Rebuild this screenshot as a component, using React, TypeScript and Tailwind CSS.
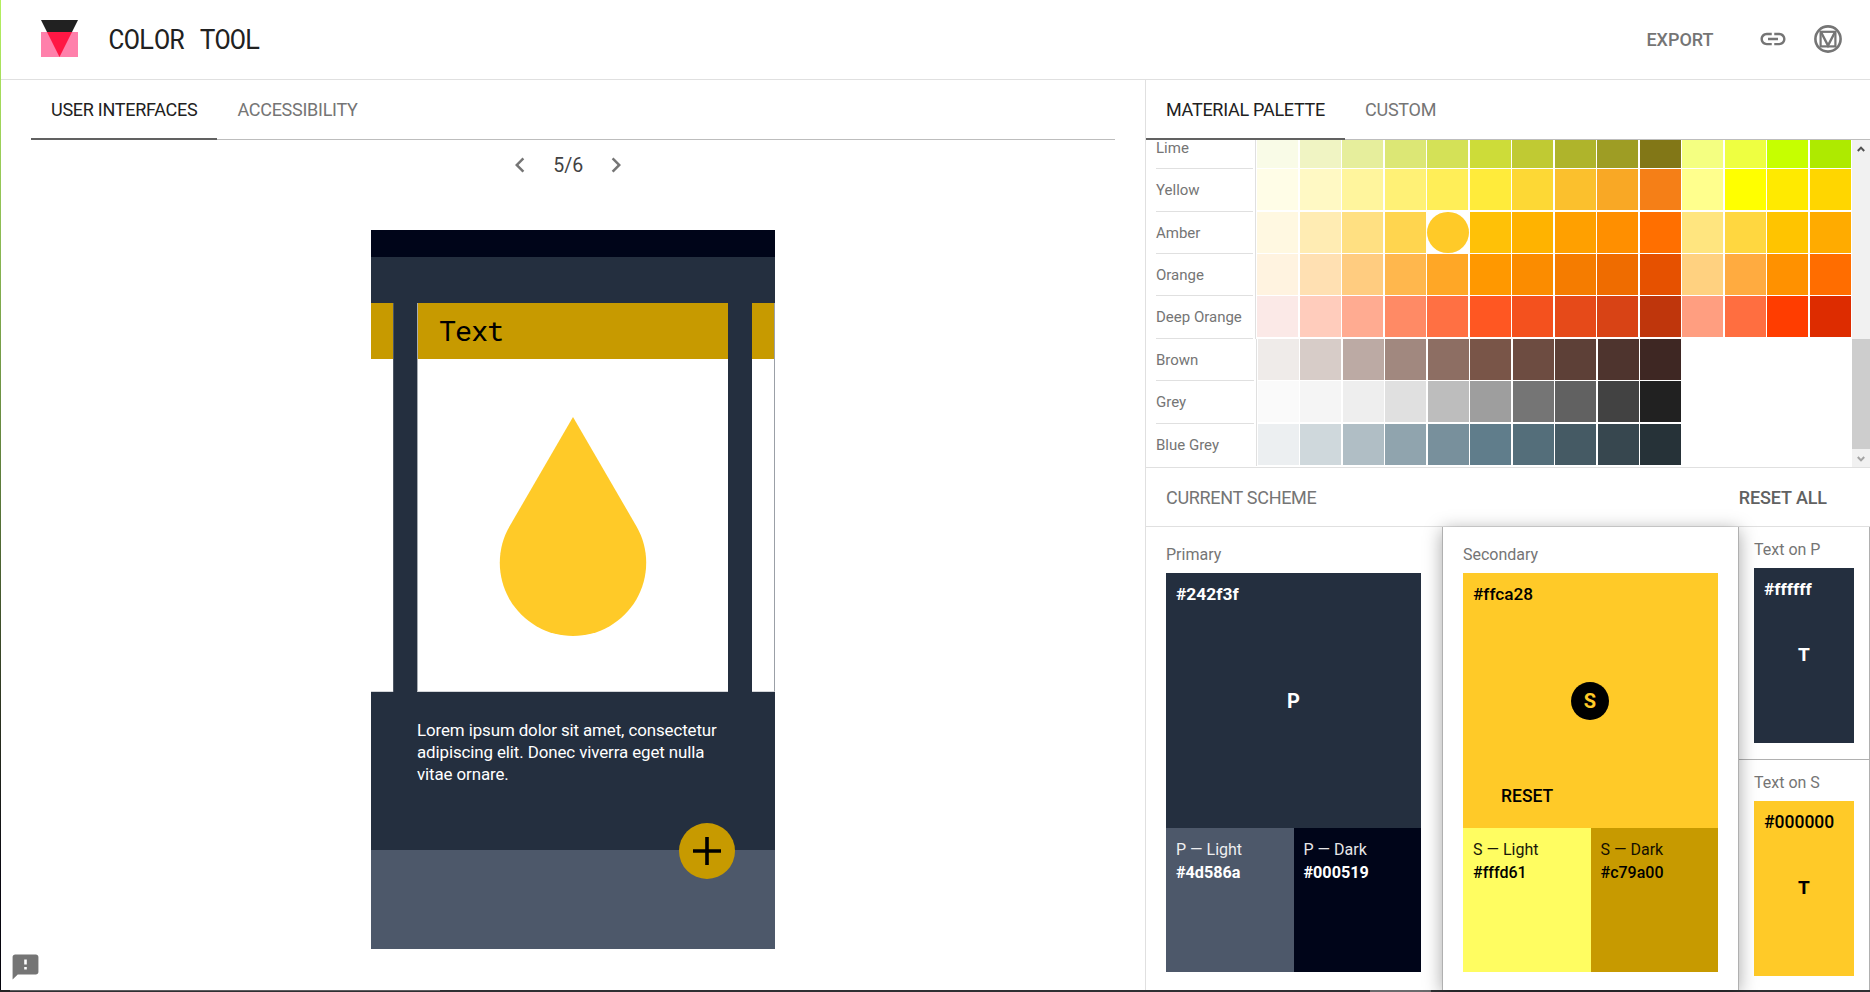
import React from "react";

type PaletteRow = { name: string; colors: string[] };

const PALETTE: PaletteRow[] = [
  { name: "Lime", colors: ["#f9fbe7", "#f0f4c3", "#e6ee9c", "#dce775", "#d4e157", "#cddc39", "#c0ca33", "#afb42b", "#9e9d24", "#827717", "#f4ff81", "#eeff41", "#c6ff00", "#aeea00"] },
  { name: "Yellow", colors: ["#fffde7", "#fff9c4", "#fff59d", "#fff176", "#ffee58", "#ffeb3b", "#fdd835", "#fbc02d", "#f9a825", "#f57f17", "#ffff8d", "#ffff00", "#ffea00", "#ffd600"] },
  { name: "Amber", colors: ["#fff8e1", "#ffecb3", "#ffe082", "#ffd54f", "#ffca28", "#ffc107", "#ffb300", "#ffa000", "#ff8f00", "#ff6f00", "#ffe57f", "#ffd740", "#ffc400", "#ffab00"] },
  { name: "Orange", colors: ["#fff3e0", "#ffe0b2", "#ffcc80", "#ffb74d", "#ffa726", "#ff9800", "#fb8c00", "#f57c00", "#ef6c00", "#e65100", "#ffd180", "#ffab40", "#ff9100", "#ff6d00"] },
  { name: "Deep Orange", colors: ["#fbe9e7", "#ffccbc", "#ffab91", "#ff8a65", "#ff7043", "#ff5722", "#f4511e", "#e64a19", "#d84315", "#bf360c", "#ff9e80", "#ff6e40", "#ff3d00", "#dd2c00"] },
  { name: "Brown", colors: ["#efebe9", "#d7ccc8", "#bcaaa4", "#a1887f", "#8d6e63", "#795548", "#6d4c41", "#5d4037", "#4e342e", "#3e2723"] },
  { name: "Grey", colors: ["#fafafa", "#f5f5f5", "#eeeeee", "#e0e0e0", "#bdbdbd", "#9e9e9e", "#757575", "#616161", "#424242", "#212121"] },
  { name: "Blue Grey", colors: ["#eceff1", "#cfd8dc", "#b0bec5", "#90a4ae", "#78909c", "#607d8b", "#546e7a", "#455a64", "#37474f", "#263238"] },
];

const SELECTED = "#ffca28";

function Header() {
  return (
    <header className="flex h-20 shrink-0 items-center border-b border-[#e0e0e0] pl-10 pr-[27px] text-[#757575]">
      <svg width="37" height="37" viewBox="0 0 37 37" className="-mt-0.5">
        <path d="M0 0H37L18.5 37Z" fill="#212121" />
        <rect y="12" width="37" height="25" fill="#ff80ab" />
        <path d="M6 12H31L18.5 37Z" fill="#ff1744" />
      </svg>
      <h1 className="-mt-0.5 ml-[30.5px] font-['Roboto_Mono','Liberation_Mono',monospace] text-[27px] leading-8 tracking-[-1.05px] text-[#212121]">
        COLOR TOOL
      </h1>
      <div className="ml-auto flex items-center">
        <span className="text-[18px] font-medium leading-6">EXPORT</span>
        <svg width="30" height="30" viewBox="0 0 24 24" fill="currentColor" className="-mt-px ml-[44px]">
          <path d="M3.9 12c0-1.71 1.39-3.1 3.1-3.1h4V7H7c-2.76 0-5 2.24-5 5s2.24 5 5 5h4v-1.9H7c-1.71 0-3.1-1.39-3.1-3.1zM8 13h8v-2H8v2zm9-6h-4v1.9h4c1.71 0 3.1 1.39 3.1 3.1s-1.39 3.1-3.1 3.1h-4V17h4c2.76 0 5-2.24 5-5s-2.24-5-5-5z" />
        </svg>
        <svg width="30" height="30" viewBox="0 0 30 30" fill="none" stroke="currentColor" strokeWidth="2.6" className="-mt-px ml-[25.5px]">
          <circle cx="15" cy="15" r="12.6" />
          <rect x="7.6" y="7.8" width="14.8" height="14.6" strokeWidth="2.2" />
          <path d="M8 8L15 21.6L22 8" strokeWidth="2.4" />
        </svg>
      </div>
    </header>
  );
}

function Tabs({ active, other }: { active: string; other: string }) {
  return (
    <div className="flex h-[60px] shrink-0 border-b border-[#bdbdbd] text-[18px] leading-[60px]">
      <div className="-mb-px h-[60px] whitespace-nowrap border-b-2 border-[#616161] px-5 tracking-[-0.27px] text-[#212121]">{active}</div>
      <div className="whitespace-nowrap px-5 tracking-[-0.27px] text-[#757575]">{other}</div>
    </div>
  );
}

function Preview() {
  return (
    <div className="relative mx-auto flex h-[719px] w-[404px] flex-col">
      <div className="h-[27px] bg-[#000519]" />
      <div className="h-[46px] bg-[#242f3f]" />
      <div className="flex h-[389px]">
        <div className="w-[22px] border-b border-[#d3d5d9]">
          <div className="h-14 bg-[#c79a00]" />
        </div>
        <div className="w-6 border-l border-[#4d5663] bg-[#242f3f]" />
        <div className="flex w-[311px] flex-col items-center border-b border-l border-b-[#d3d5d9] border-l-[#a7acb2]">
          <div className="h-14 w-full bg-[#c79a00] pl-[21px] font-['Roboto_Mono','Liberation_Mono',monospace] text-[28.5px] leading-[54px] tracking-[-1.1px] text-black">
            Text
          </div>
          <svg width="148" height="220" viewBox="0 0 148 220" className="mt-[58px]" fill="#ffca28">
            <path d="M74 0L137.4 109.2A73.2 73.2 0 1 1 10.6 109.2Z" />
          </svg>
        </div>
        <div className="w-6 bg-[#242f3f]" />
        <div className="w-[23px] border-b border-r border-b-[#d3d5d9] border-r-[#9ba0a7]">
          <div className="h-14 bg-[#c79a00]" />
        </div>
      </div>
      <div className="h-[158px] bg-[#242f3f] pl-[46px] pt-[27px] text-[16.9px] leading-[22px] tracking-[-0.1px] text-white">
        Lorem ipsum dolor sit amet, consectetur
        <br />
        adipiscing elit. Donec viverra eget nulla
        <br />
        vitae ornare.
      </div>
      <div className="h-[99px] bg-[#4d586a]" />
      <svg width="56" height="56" viewBox="0 0 56 56" className="absolute left-[308px] top-[593px]">
        <circle cx="28" cy="28" r="28" fill="#c79a00" />
        <path d="M28 14V42M14 28H42" stroke="#000" strokeWidth="3.6" />
      </svg>
    </div>
  );
}

function PaletteGrid() {
  return (
    <div className="flex h-[328px] shrink-0 border-b border-[#e0e0e0]">
      <div className="flex min-w-0 flex-1 flex-col justify-end overflow-hidden pb-[0.7px]">
        {PALETTE.map((row, i) => (
          <div key={row.name} className="flex h-[42.48px] shrink-0">
            <div
              className={
                "ml-[10px] w-[97.5px] whitespace-nowrap text-[15px] leading-[43.6px] text-[#757575] " +
                (i < PALETTE.length - 1 ? "border-b border-[#e0e0e0]" : "")
              }
            >
              {row.name}
            </div>
            <div className="ml-[2.5px] w-px bg-[#e0e0e0]" />
            <div className="flex pl-px">
              {row.colors.map((c) => (
                <div key={c} className="w-[42.47px]">
                  <div
                    className={"h-[41px] " + (c === SELECTED ? "w-[41.5px] rounded-full" : "w-[41px]")}
                    style={{ backgroundColor: c }}
                  />
                </div>
              ))}
            </div>
          </div>
        ))}
      </div>
      <div className="flex w-[18px] flex-col items-center bg-[#f1f1f1]">
        <svg width="18" height="18" viewBox="0 0 18 18" fill="none" stroke="#505050" strokeWidth="2">
          <path d="M5.8 11L9 7.6L12.2 11" />
        </svg>
        <div className="mt-[181px] h-[110px] w-full bg-[#cdcdcd]" />
        <svg width="18" height="18" viewBox="0 0 18 18" fill="none" stroke="#a3a3a3" strokeWidth="2">
          <path d="M5.8 8L9 11.4L12.2 8" />
        </svg>
      </div>
    </div>
  );
}

function SchemeCard(props: {
  title: string;
  hex: string;
  main: string;
  tone: string;
  hexStyle: string;
  shadeHexStyle: string;
  marker: React.ReactNode;
  reset?: boolean;
  shades: { name: string; hex: string; bg: string }[];
}) {
  return (
    <div className="pl-5 pt-3">
      <div className="h-[34px] text-[16px] leading-8 text-[#757575]">{props.title}</div>
      <div className={"flex h-[255px] w-[255px] flex-col " + props.main + " " + props.tone}>
        <div className={"h-[109px] pl-[10px] pt-[9px] leading-6 " + props.hexStyle}>{props.hex}</div>
        <div className="flex h-[37px] items-center justify-center">{props.marker}</div>
        {props.reset && <div className="pl-[38px] pt-[65px] text-[17.5px] font-medium leading-6">RESET</div>}
      </div>
      <div className="flex">
        {props.shades.map((s) => (
          <div key={s.hex} className={"h-36 w-[127.5px] pl-[10px] pt-[10px] text-[16px] leading-[23px] " + s.bg + " " + props.tone}>
            <div className="opacity-90">{s.name}</div>
            <div className={props.shadeHexStyle}>{s.hex}</div>
          </div>
        ))}
      </div>
    </div>
  );
}

function TextCard({ title, hex, box, hexStyle }: { title: string; hex: string; box: string; hexStyle: string }) {
  return (
    <div className="pl-[15px] pt-[7px]">
      <div className="h-[34px] text-[16px] leading-8 text-[#757575]">{title}</div>
      <div className={"flex h-[175px] w-[100px] flex-col " + box}>
        <div className={"h-[67px] pl-[10px] pt-[9px] leading-6 " + hexStyle}>{hex}</div>
        <div className="text-center text-[19px] font-bold leading-[39px]">T</div>
      </div>
    </div>
  );
}

export default function App() {
  return (
    <div className="flex h-[992px] w-[1870px] flex-col overflow-hidden bg-white font-['Roboto',sans-serif]">
      <div className="flex h-[990px]">
        <div className="w-px bg-[linear-gradient(to_bottom,#b4f05f_0%,#8fbf55_22%,#5b7a3a_50%,#2c3320_72%,#0a0912_88%,#05040c_100%)]" />
        <div className="flex w-[1869px] flex-col">
          <Header />
          <div className="flex min-h-0 flex-1">
            <main className="flex w-[1144px] flex-col">
              <div className="mx-[30px]">
                <Tabs active="USER INTERFACES" other="ACCESSIBILITY" />
              </div>
              <div className="flex h-[90px] items-start justify-center pr-[9.5px] pt-[10px] text-[#757575]">
                <svg width="30" height="30" viewBox="0 0 24 24" fill="currentColor">
                  <path d="M15.41 7.41L14 6l-6 6 6 6 1.41-1.41L10.83 12z" />
                </svg>
                <span className="w-[66px] text-center text-[19.5px] leading-[31px] text-[#424242]">5/6</span>
                <svg width="30" height="30" viewBox="0 0 24 24" fill="currentColor">
                  <path d="M10 6L8.59 7.41 13.17 12l-4.58 4.59L10 18l6-6z" />
                </svg>
              </div>
              <Preview />
              <svg width="31" height="30" viewBox="0 0 24 24" preserveAspectRatio="none" fill="#757575" className="ml-[9.4px] mt-[2.5px]">
                <path d="M20 2H4c-1.1 0-1.99.9-1.99 2L2 22l4-4h14c1.1 0 2-.9 2-2V4c0-1.1-.9-2-2-2zm-7 12h-2v-2h2v2zm0-4h-2V6h2v4z" />
              </svg>
            </main>
            <aside className="flex w-[725px] flex-col border-l border-[#e0e0e0]">
              <Tabs active="MATERIAL PALETTE" other="CUSTOM" />
              <PaletteGrid />
              <div className="flex h-[59px] shrink-0 items-center justify-between border-b border-[#e0e0e0] pl-5 pr-[43px] text-[18px] text-[#757575]">
                <span className="tracking-[-0.3px]">CURRENT SCHEME</span>
                <span className="font-medium tracking-[-0.1px] text-[#616161]">RESET ALL</span>
              </div>
              <div className="flex min-h-0 flex-1">
                <section className="w-[296px]">
                  <SchemeCard
                    title="Primary"
                    hex="#242f3f"
                    main="bg-[#242f3f]"
                    tone="text-white"
                    hexStyle="text-[17.4px] font-bold"
                    shadeHexStyle="text-[16.2px] font-bold"
                    marker={<span className="text-[20px] font-bold">P</span>}
                    shades={[
                      { name: "P — Light", hex: "#4d586a", bg: "bg-[#4d586a]" },
                      { name: "P — Dark", hex: "#000519", bg: "bg-[#000519]" },
                    ]}
                  />
                </section>
                <section className="z-10 w-[297px] border-x border-[#b0b0b0] bg-white shadow-[0_3px_17px_rgba(0,0,0,0.35)]">
                  <SchemeCard
                    title="Secondary"
                    hex="#ffca28"
                    main="bg-[#ffca28]"
                    tone="text-black"
                    hexStyle="text-[17.2px] font-medium"
                    shadeHexStyle="font-medium"
                    reset
                    marker={
                      <span className="mr-px flex h-[38px] w-[38px] items-center justify-center rounded-full bg-black text-[20px] font-bold text-[#ffca28]">
                        S
                      </span>
                    }
                    shades={[
                      { name: "S — Light", hex: "#fffd61", bg: "bg-[#fffd61]" },
                      { name: "S — Dark", hex: "#c79a00", bg: "bg-[#c79a00]" },
                    ]}
                  />
                </section>
                <section className="flex w-[131px] flex-col border-r border-[#b0b0b0]">
                  <div className="h-[233px] border-b border-[#b0b0b0]">
                    <TextCard title="Text on P" hex="#ffffff" box="bg-[#242f3f] text-white" hexStyle="text-[17.4px] font-bold" />
                  </div>
                  <TextCard title="Text on S" hex="#000000" box="bg-[#ffca28] text-black" hexStyle="text-[17.5px] font-medium" />
                </section>
              </div>
            </aside>
          </div>
        </div>
      </div>
      <div className="flex h-0.5 bg-[#2f3033]">
        <div className="w-[10px] bg-[#242424]" />
        <div className="w-[430px] border-t border-[#5c5c5e]" />
        <div className="ml-[930px] w-[61px] bg-[#6a6a6c]" />
      </div>
    </div>
  );
}
